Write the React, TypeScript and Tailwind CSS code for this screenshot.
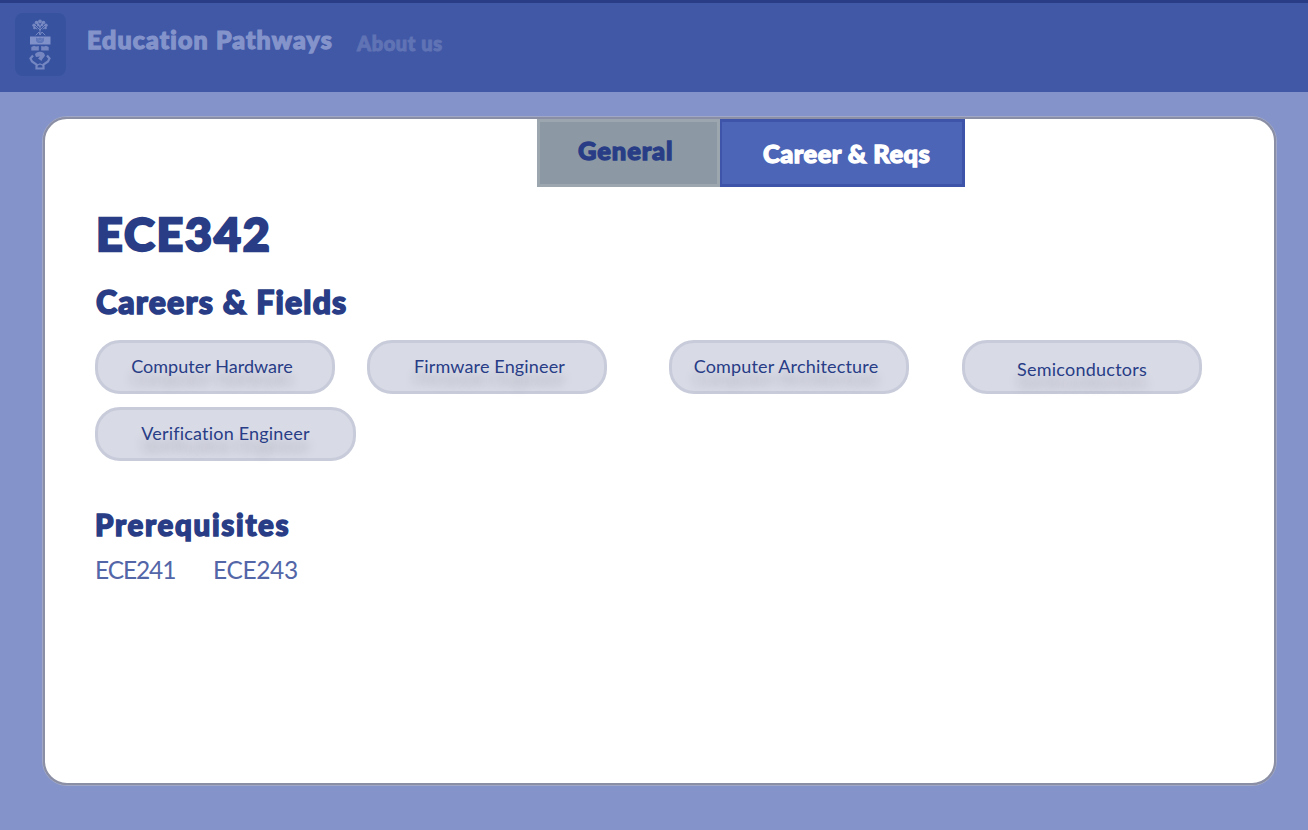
type ChipProps = { label: string; box: string; text: string };

const fields: ChipProps[] = [
  { label: 'Computer Hardware', box: 'w-60', text: 'pr-[6px] tracking-[0.04px]' },
  { label: 'Firmware Engineer', box: 'ml-8 w-60', text: 'pl-[5px] tracking-[0.15px]' },
  { label: 'Computer Architecture', box: 'ml-[62px] w-60', text: 'pr-[6px] tracking-[0.17px]' },
  { label: 'Semiconductors', box: 'ml-[53px] w-60', text: 'pt-[5px] tracking-[0.24px]' },
  { label: 'Verification Engineer', box: 'mt-[13px] w-[261px]', text: 'tracking-[0.2px]' },
];

function Chip({ label, box, text }: ChipProps) {
  return (
    <li className={`flex h-[54px] shrink-0 items-center justify-center rounded-[25px] border-[3px] border-[#c8cbda] bg-[#d8dae6] pb-0.5 ${box}`}>
      <span className={`whitespace-nowrap font-[Lato,sans-serif] text-[18px] leading-6 text-[#283d86] [text-shadow:0_12px_11px_rgba(0,0,0,0.22)] ${text}`}>{label}</span>
    </li>
  );
}

function Crest() {
  return (
    <div className="flex h-[63px] w-[51px] shrink-0 items-center justify-center rounded-[8px] bg-[#37539f] pr-0.5">
      <svg width="24" height="52" viewBox="0 0 24 52" className="text-[#8090c8]" fill="none" stroke="currentColor">
        <g strokeWidth="1" strokeLinecap="round" opacity=".85">
          <path d="M12 15V7M12 11L7 6M12 11L17 6M12 8L9 3M12 8L15 3M6 8L9 10M18 8L15 10M8 16L11 13L12 16L14 13L17 16" />
        </g>
        <g fill="currentColor" stroke="none" opacity=".85">
          <circle cx="12" cy="2.5" r="1.9" /><circle cx="8.5" cy="3.5" r="1.8" /><circle cx="15.5" cy="3.5" r="1.8" />
          <circle cx="6" cy="6.2" r="1.7" /><circle cx="18" cy="6.2" r="1.7" /><circle cx="10.2" cy="6" r="1.4" /><circle cx="14" cy="6" r="1.4" />
          <circle cx="6.4" cy="9" r="1.3" /><circle cx="17.6" cy="9" r="1.3" />
          <path d="M3.3 31.5V28L6 26.8L8 27.6L10.8 27V31.5ZM13.2 31.5V27L16 27.6L18 26.8L20.7 28V31.5Z" />
          <path d="M7 35.5C8 32.5 13 32 16 34L17 36.5C16 38.5 14 40 13.5 42L10 39.5L12 37.5L8 38Z" />
        </g>
        <path d="M2 17.5H22.5V25.5H2Z" fill="currentColor" stroke="none" />
        <path d="M8 18.5L10 19.5L12 18.5L14 19.5L16 18.5V22L14 24H10L8 22Z" fill="#5f76b9" stroke="none" />
        <path d="M10 20.5L12 22L14 20.5" stroke="#7184c1" strokeWidth=".8" />
        <path d="M5 36.5L2.5 39.5L4 42.5L8.5 45.5V49.5H15.5V45.5L20 42.5L21.5 39.5L19 36.5" strokeWidth="2.2" opacity=".85" />
        <path d="M8.5 46.5L12 45L15.5 46.5" strokeWidth="1.2" opacity=".85" />
      </svg>
    </div>
  );
}

const heavy = '[stroke-linejoin:round] [-webkit-text-stroke:0.05em_currentColor] whitespace-nowrap';

export default function App() {
  return (
    <div className="h-[830px] w-[1308px] overflow-hidden bg-[#8494cb] font-[Lato,sans-serif] font-black text-[#283d86]">
      <header className="flex h-[92px] items-start border-t-[3px] border-[#283d86] bg-[#4158a6] pl-[15px] pt-[10px]">
        <Crest />
        <h1 className={`ml-[21px] mt-[10px] w-[247px] text-[25px] leading-8 tracking-[1.13px] text-[#8494cb] ${heavy}`}>Education Pathways</h1>
        <a className={`ml-[23px] mt-[14px] text-[20px] leading-8 tracking-[0.6px] text-[#6073b4] ${heavy}`}>About us</a>
      </header>
      <main className="ml-[42px] mt-[24px] h-[670px] w-[1235px] rounded-[25px] border border-[#a1a8c7] bg-[#8b8fa5]">
        <div className="h-full rounded-[24px] border-2 border-[#8b8fa5] bg-white">
          <nav className="ml-[492px] flex h-[68px]">
            <button className="flex h-[68px] w-[183px] items-start border-[3px] border-[#9ba6ae] bg-[#8c99a4] pl-[38px] pt-[12px] text-[25.5px] leading-8 tracking-[0.9px]"><span className={heavy}>General</span></button>
            <button className="flex h-[68px] w-[245px] items-start border-[3px] border-l-2 border-[#3d54a8] bg-[#4c65b7] pl-[41px] pt-[15px] text-[25.5px] leading-8 tracking-[0.45px] text-white"><span className={heavy}>Career &amp; Reqs</span></button>
          </nav>
          <section className="pl-[50px]">
            <h2 className={`mt-[14px] h-16 pl-px text-[46.5px] leading-[64px] tracking-[1.9px] ${heavy}`}>ECE342</h2>
            <h3 className={`mt-[14px] h-[46px] pl-px text-[32px] leading-[46px] tracking-[1.2px] ${heavy}`}>Careers &amp; Fields</h3>
            <ul className="mt-[15px] flex flex-wrap font-normal">
              {fields.map((field) => <Chip key={field.label} {...field} />)}
            </ul>
            <h3 className={`mt-[44px] h-10 text-[29.5px] leading-10 tracking-[1.7px] ${heavy}`}>Prerequisites</h3>
            <div className="mt-[9px] flex text-[24.5px] font-normal leading-8 text-[#5366a8]">
              <span className="w-[118px] tracking-[-1.1px]">ECE241</span>
              <span className="tracking-[-0.35px]">ECE243</span>
            </div>
          </section>
        </div>
      </main>
    </div>
  );
}
